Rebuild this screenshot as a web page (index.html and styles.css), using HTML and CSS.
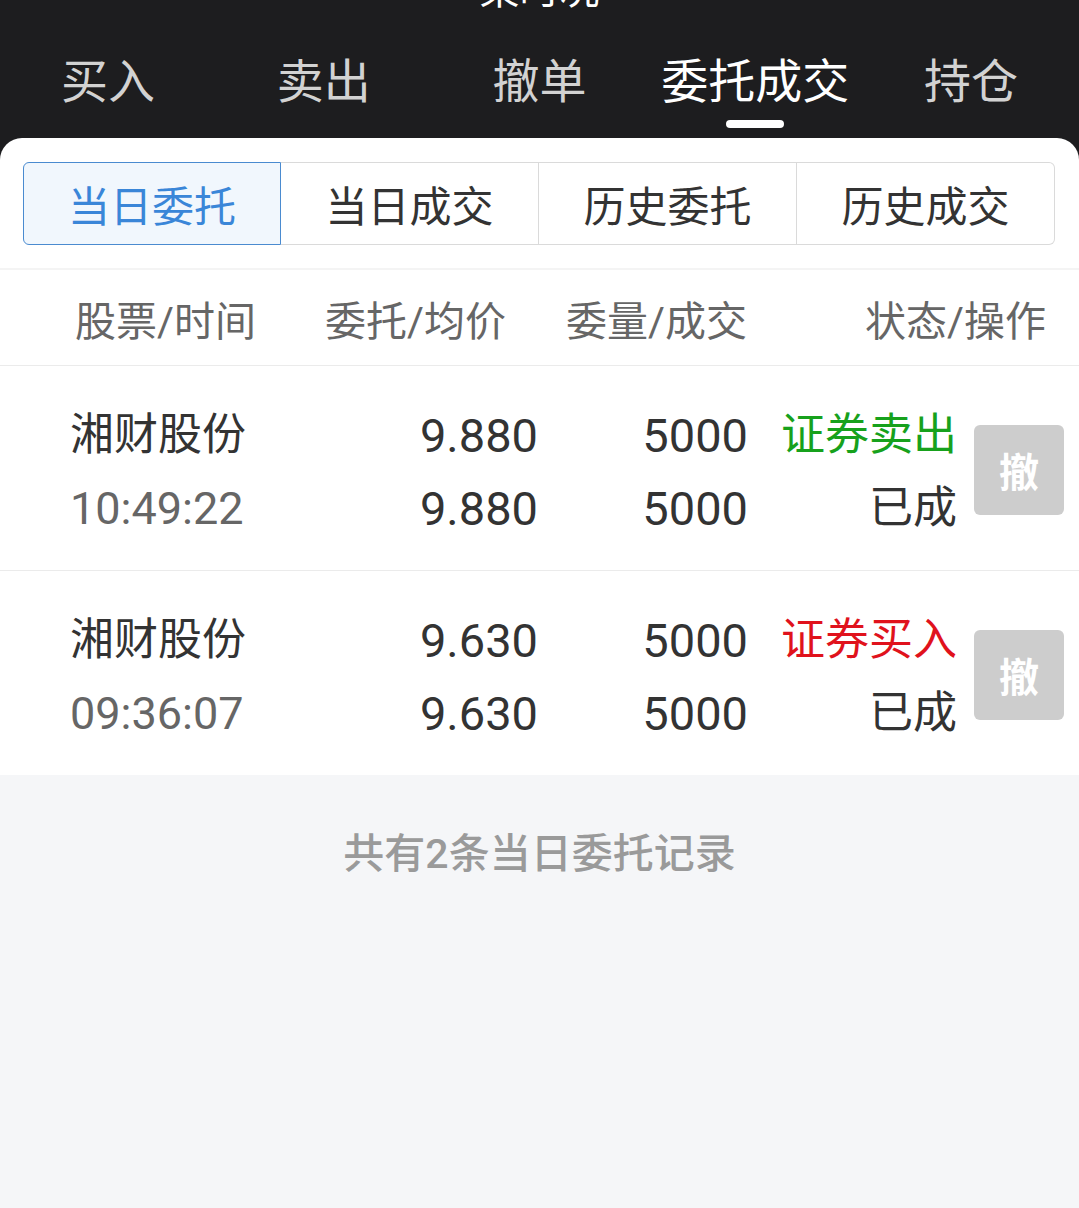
FILE: index.html
```html
<!DOCTYPE html>
<html lang="zh-CN">
<head>
    <meta charset="UTF-8">
    <meta name="viewport" content="width=device-width, initial-scale=1.0">
    <title>委托成交</title>
    <link rel="stylesheet" href="styles.css">
</head>
<body>
    <div class="app">
        <div class="title"><span>某时况</span></div>
        <nav class="tabs">
            <div class="tab">买入</div>
            <div class="tab">卖出</div>
            <div class="tab">撤单</div>
            <div class="tab active">委托成交</div>
            <div class="tab">持仓</div>
        </nav>

        <div class="card">
            <div class="seg-wrap">
                <div class="seg">
                    <div class="seg-item active">当日委托</div>
                    <div class="seg-item">当日成交</div>
                    <div class="seg-item">历史委托</div>
                    <div class="seg-item">历史成交</div>
                </div>
            </div>

            <div class="list-head">
                <span>股票/时间</span>
                <span>委托/均价</span>
                <span>委量/成交</span>
                <span class="right">状态/操作</span>
            </div>

            <!-- orders -->
            <div class="order">
                <div class="cell">
                    <div class="name">湘财股份</div>
                    <div class="time">10:49:22</div>
                </div>
                <div class="cell num digits">
                    <div>9.880</div>
                    <div>9.880</div>
                </div>
                <div class="cell num digits">
                    <div>5000</div>
                    <div>5000</div>
                </div>
                <div class="cell num">
                    <div class="sell">证券卖出</div>
                    <div>已成</div>
                </div>
                <button class="cancel-btn">撤</button>
            </div>

            <div class="order">
                <div class="cell">
                    <div class="name">湘财股份</div>
                    <div class="time">09:36:07</div>
                </div>
                <div class="cell num digits">
                    <div>9.630</div>
                    <div>9.630</div>
                </div>
                <div class="cell num digits">
                    <div>5000</div>
                    <div>5000</div>
                </div>
                <div class="cell num">
                    <div class="buy">证券买入</div>
                    <div>已成</div>
                </div>
                <button class="cancel-btn">撤</button>
            </div>
        </div>
    </div>

    <div class="footer">共有2条当日委托记录</div>
</body>
</html>
```

FILE: styles.css
```css
body {
    margin: 0;
    font-family: Roboto, "Noto Sans CJK SC", sans-serif;
    background-color: #f5f6f8;
    color: #333;
}

.app {
    background-color: #1d1d1f;
}

.title {
    height: 11px;
    overflow: hidden;
    display: flex;
    justify-content: center;
    align-items: flex-end;
}

.title span {
    color: #fff;
    font-size: 40px;
    line-height: 1;
}

.tabs {
    display: grid;
    grid-template-columns: repeat(5, 1fr);
    height: 127px;
}

.tab {
    display: flex;
    flex-direction: column;
    align-items: center;
    padding-top: 43px;
    font-size: 47px;
    line-height: 56px;
    color: #d2d2d2;
}

.tab::after {
    content: "";
    width: 58px;
    height: 8px;
    margin-top: 10px;
    border-radius: 4px;
}

.tab.active {
    color: #fff;
}

.tab.active::after {
    background-color: #fff;
}

.card {
    background-color: #fff;
    border-radius: 22px 22px 0 0;
}

.seg-wrap {
    padding: 24px 24px 23px 23px;
}

.seg {
    display: grid;
    grid-template-columns: repeat(4, 1fr);
    height: 83px;
}

.seg-item {
    display: flex;
    align-items: center;
    justify-content: center;
    font-size: 42px;
    color: #333;
    border: 1px solid #dadada;
    border-left: none;
}

.seg-item:first-child {
    border-left: 1px solid #dadada;
    border-radius: 6px 0 0 6px;
}

.seg-item:last-child {
    border-radius: 0 6px 6px 0;
}

.seg-item.active {
    background-color: #f1f7fd;
    border-color: #4a8bd0;
    color: #3a86d8;
}

.list-head {
    display: grid;
    grid-template-columns: 250px 241px 1fr auto;
    align-items: center;
    height: 95px;
    padding: 0 33px 0 75px;
    border-top: 2px solid #f4f4f4;
    border-bottom: 1px solid #ebebeb;
    font-size: 41px;
    color: #666;
}

.order {
    display: grid;
    grid-template-columns: 1fr 200px 210px 209px 107px;
    align-items: center;
    padding: 33px 15px 25px 70px;
    font-size: 44px;
    line-height: 73px;
}

.order + .order {
    border-top: 1px solid #ebebeb;
}

.digits {
    font-size: 47px;
}

.num {
    text-align: right;
}

.time {
    font-size: 45px;
    color: #666;
}

.sell {
    color: #17a11c;
}

.buy {
    color: #e0121c;
}

.cancel-btn {
    justify-self: end;
    width: 90px;
    height: 90px;
    margin-bottom: 4px;
    border: none;
    border-radius: 6px;
    background-color: #cdcdcd;
    color: #fff;
    font-family: inherit;
    font-size: 40px;
    font-weight: bold;
    padding: 0;
}

.footer {
    padding-top: 51px;
    height: 381px;
    text-align: center;
    font-size: 41px;
    line-height: 56px;
    font-weight: 500;
    color: #9a9a9a;
}
```
